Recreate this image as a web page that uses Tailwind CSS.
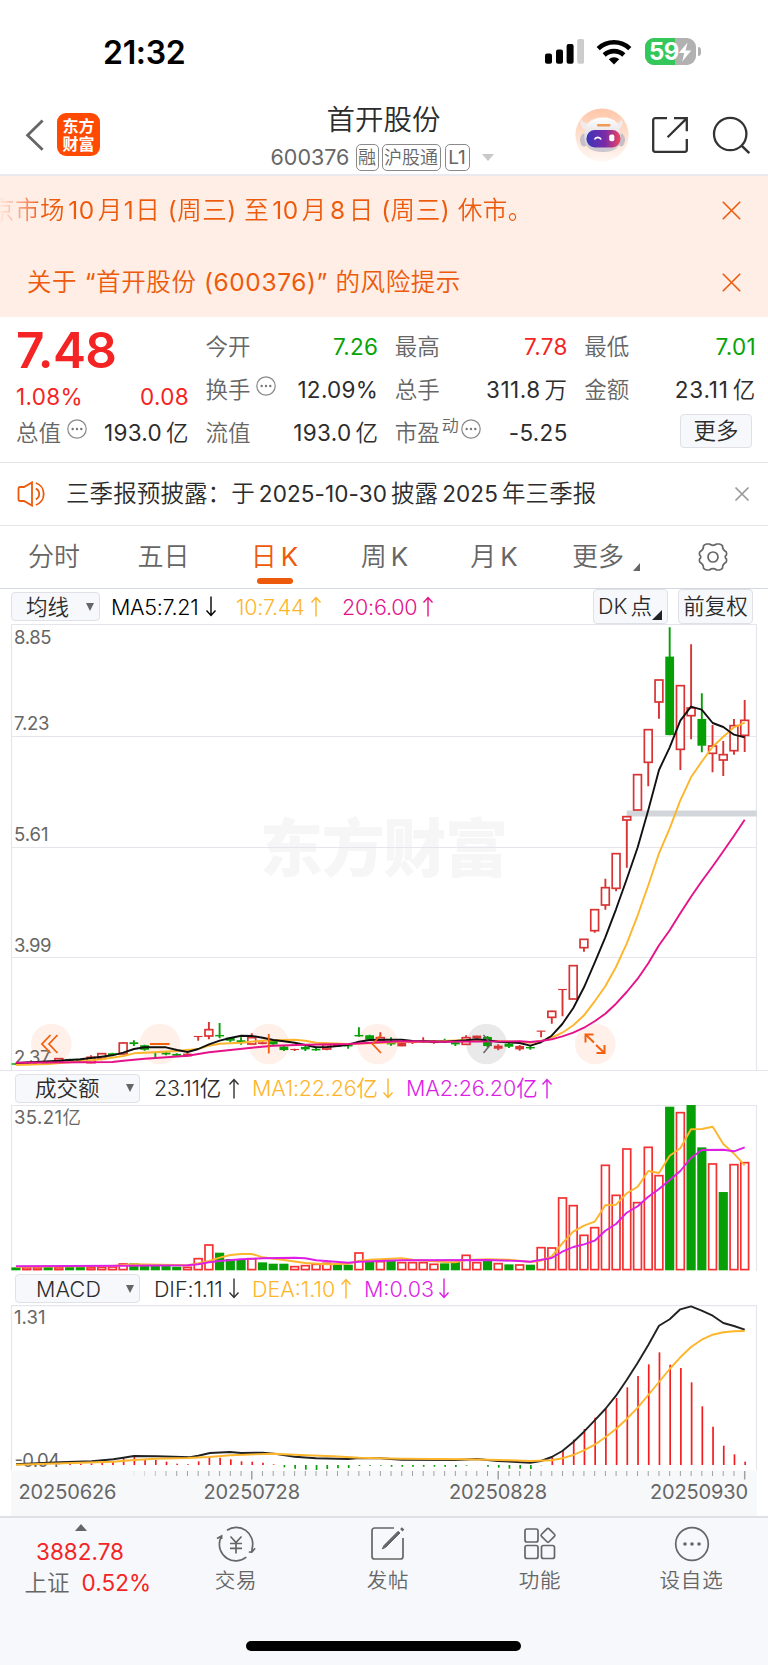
<!DOCTYPE html>
<html lang="zh-CN">
<head>
<meta charset="utf-8">
<title>首开股份 600376</title>
<script src="https://cdn.jsdelivr.net/npm/@tailwindcss/browser@4"></script>
</head>
<body class="w-[768px] h-[1665px] overflow-hidden bg-white text-[#2c2c2c] font-normal font-['Inter','Noto_Sans_CJK_SC_DemiLight','Noto_Sans_CJK_SC',sans-serif]">
<div class="flex flex-col w-[768px] h-[1665px]">

  <!-- status bar -->
  <div class="h-[90px] shrink-0 flex items-start pt-[34px] pl-[103px] pr-[67px] justify-between">
    <div class="text-[32px] leading-[37px] font-semibold text-black tracking-[-0.3px]">21:32</div>
    <div class="flex items-center mt-[4px] h-[27px]">
      <svg class="w-[39px] h-[25px]" viewBox="545 39.5 39 25"><g fill="#000"><rect x="545" y="54" width="7" height="10.2" rx="2"/><rect x="556" y="50" width="7" height="14.2" rx="2"/><rect x="566.6" y="44.6" width="7" height="19.6" rx="2"/></g><rect x="577.2" y="39.6" width="7" height="24.6" rx="2" fill="#ccc"/></svg>
      <svg class="w-[36px] h-[26px] ml-[12px]" viewBox="0 0 36 26"><g fill="none" stroke="#000" stroke-width="4.6"><path d="M2.2 9.6a23 23 0 0 1 31.6 0"/><path d="M8.2 16a14.3 14.3 0 0 1 19.6 0"/></g><path d="M18 25.5l-5.2-5.2a7.6 7.6 0 0 1 10.4 0z"/></svg>
      <div class="relative ml-[13px] w-[51px] h-[27px] rounded-[9px] overflow-hidden bg-[#b1b1b1] flex items-center">
        <div class="absolute left-0 top-0 h-full w-[30px] bg-[#34c759]"></div>
        <span class="relative ml-[4px] text-[24px] leading-[27px] font-bold text-white tracking-[-0.5px]">59</span>
        <svg class="relative w-[14px] h-[20px] -ml-[1px]" viewBox="0 0 14 20"><path fill="#fff" d="M9.5.5L.8 11h5.4L4.3 19.5 13.2 8.6H7.6z"/></svg>
      </div>
      <div class="ml-[2px] w-[3px] h-[9px] rounded-r-full bg-[#b1b1b1]"></div>
    </div>
  </div>

  <!-- title bar -->
  <header class="relative h-[86px] shrink-0 border-b-2 border-[#e9eaee] flex items-start justify-between pl-[25px] pr-[16px]">
    <div class="flex items-center pt-[23px]">
      <svg class="w-[20px] h-[34px]" viewBox="0 0 20 34"><path d="M17.6 2.5L2.6 17.2l15 14.6" fill="none" stroke="#666" stroke-width="2.8"/></svg>
      <div class="ml-[12px] w-[43px] h-[43px] rounded-[9px] bg-[#ff4a04] text-white font-bold font-['Noto_Sans_CJK_SC',sans-serif] text-[16px] leading-[17.5px] flex flex-col items-center justify-center"><span>东方</span><span>财富</span></div>
    </div>
    <div class="absolute inset-x-0 top-[13px] flex flex-col items-center">
      <div class="text-[28.5px] leading-[34px] -ml-[1px]">首开股份</div>
      <div class="flex items-center h-[28px] mt-[6px] -ml-[4px] text-[#666]">
        <span class="text-[21.5px] mr-[6px] w-[79px] whitespace-nowrap">600376</span>
        <span class="h-[27px] w-[23px] border border-[#8a8a8a] rounded-[5px] text-[18px] leading-[25px] text-center">融</span>
        <span class="h-[27px] w-[59px] ml-[3px] border border-[#8a8a8a] rounded-[5px] text-[18px] leading-[25px] text-center whitespace-nowrap">沪股通</span>
        <span class="h-[27px] w-[25px] ml-[4px] border border-[#8a8a8a] rounded-[5px] text-[19px] leading-[25px] text-center">L1</span>
        <svg class="w-[12px] h-[7px] ml-[12px]" viewBox="0 0 12 7"><path d="M0 0h12L6 7z" fill="#c8c8c8"/></svg>
      </div>
    </div>
    <div class="flex items-center pt-[18px]">
      <svg class="w-[54px] h-[54px]" viewBox="0 0 54 54">
        <defs>
          <linearGradient id="halo" x1="0" y1="0" x2="0" y2="1"><stop offset="0" stop-color="#fec6a8"/><stop offset="1" stop-color="#fff8f4"/></linearGradient>
          <linearGradient id="visor"><stop offset="0" stop-color="#3a35b8"/><stop offset=".55" stop-color="#7a2ba8"/><stop offset="1" stop-color="#f0475e"/></linearGradient>
          <linearGradient id="shell" x1="0" y1="0" x2="0" y2="1"><stop offset="0" stop-color="#fff"/><stop offset="1" stop-color="#c9c3cc"/></linearGradient>
        </defs>
        <circle cx="27" cy="27" r="26.6" fill="url(#halo)"/>
        <path d="M6.500 11c-3 5 0 9.500 5 10.500l6-6c-6 0-10-.5-11-4.500zM46.500 11c3 5 0 9.500-5 10.500l-6-6c6 0 10-.5 11-4.500z" fill="#f3ebea"/>
        <ellipse cx="9" cy="32" rx="4" ry="6.500" fill="#c4bfc8"/><ellipse cx="46" cy="32" rx="4" ry="6.500" fill="#c4bfc8"/>
        <path d="M9.500 31C8.500 17 15 9.500 28 9.500s18.500 7.500 17.500 21.500c0 9-7 13-17.500 13s-18.500-4-18.500-13z" fill="url(#shell)"/>
        <rect x="11.500" y="22" width="34" height="17.500" rx="8.200" fill="url(#visor)"/>
        <path d="M19.500 31.500a3.600 3.600 0 0 1 6.600 0" fill="none" stroke="#fff" stroke-width="1.700"/>
        <rect x="34.300" y="26.500" width="5" height="6.800" rx="1.800" fill="#fff"/>
        <rect x="22" y="16" width="13.500" height="2.600" rx="1" fill="#f09a55"/>
      </svg>
      <svg class="ml-[21px] w-[40px] h-[40px]" viewBox="0 0 40 40"><path d="M17 3.2H5.2a2 2 0 0 0-2 2v29.6a2 2 0 0 0 2 2h29.6a2 2 0 0 0 2-2V24M24 3.2h12.8v13M36.4 3.6L17.6 22.2" fill="none" stroke="#333" stroke-width="2.3"/></svg>
      <svg class="ml-[22px] w-[40px] h-[40px]" viewBox="0 0 40 40"><circle cx="18.2" cy="19" r="16.2" fill="none" stroke="#333" stroke-width="2.3"/><path d="M29.3 30.3l8 7.8" stroke="#333" stroke-width="2.5"/></svg>
    </div>
  </header>

  <!-- notices -->
  <section class="h-[141px] shrink-0 bg-[#feeee5] text-[#ed5a0c] text-[24.5px] flex flex-col">
    <div class="flex-1 flex items-center justify-between pr-[27px] pb-[1px]">
      <div class="-ml-[10px] whitespace-nowrap tracking-[0.55px] bg-linear-to-r from-[#feeee5] from-[8px] to-[#ed5a0c] to-[50px] bg-clip-text text-transparent">京市场<span class="mx-[3px]">10</span>月<span class="mx-[1px]">1</span>日 (周三) 至<span class="mx-[3px]">10</span>月<span class="mx-[3px]">8</span>日 (周三) 休市。</div>
      <svg class="w-[19px] h-[19px]" viewBox="0 0 19 19"><path d="M.8.8l17.4 17.4M18.2.8L.8 18.2" stroke="#ed5a0c" stroke-width="1.6"/></svg>
    </div>
    <div class="flex-1 flex items-center justify-between pl-[27px] pr-[27px] pt-[1px]">
      <div class="whitespace-nowrap tracking-[0.6px]">关于 “首开股份 (600376)” 的风险提示</div>
      <svg class="w-[19px] h-[19px]" viewBox="0 0 19 19"><path d="M.8.8l17.4 17.4M18.2.8L.8 18.2" stroke="#ed5a0c" stroke-width="1.6"/></svg>
    </div>
  </section>

  <!-- quote summary -->
  <section class="h-[146px] shrink-0 border-b border-[#e2e3e6] grid grid-cols-4 gap-x-[17.5px] pl-[16px] pr-[12px] pt-[8px] text-[22.5px] leading-[43px]">
    <div class="flex flex-col">
      <div class="h-[55px] text-[49.5px] leading-[51px] font-semibold text-[#f42424] tracking-[-0.6px]">7.48</div>
      <div class="h-[31px] -mr-[1px] flex justify-between text-[#f42424] leading-[33px] tracking-[0.3px]"><span>1.08%</span><span>0.08</span></div>
      <div class="-mr-[1px] flex justify-between items-center whitespace-nowrap"><span class="flex items-center text-[#666]">总值<svg class="ml-[6px] -mt-[8px] w-[20px] h-[20px]" viewBox="0 0 20 20"><circle cx="10" cy="10" r="9.2" fill="none" stroke="#888" stroke-width="1.2"/><g fill="#777"><circle cx="5.7" cy="10" r="1.2"/><circle cx="10" cy="10" r="1.2"/><circle cx="14.3" cy="10" r="1.2"/></g></svg></span><span class="tracking-[0.3px]">193.0<span class="ml-[4px]">亿</span></span></div>
    </div>
    <div class="flex flex-col">
      <div class="-mr-[1px] flex justify-between"><span class="text-[#666]">今开</span><span class="text-[#09a309] tracking-[0.3px]">7.26</span></div>
      <div class="-mr-[1px] flex justify-between"><span class="flex items-center text-[#666]">换手<svg class="ml-[6px] -mt-[8px] w-[20px] h-[20px]" viewBox="0 0 20 20"><circle cx="10" cy="10" r="9.2" fill="none" stroke="#888" stroke-width="1.2"/><g fill="#777"><circle cx="5.7" cy="10" r="1.2"/><circle cx="10" cy="10" r="1.2"/><circle cx="14.3" cy="10" r="1.2"/></g></svg></span><span class="tracking-[0.3px]">12.09%</span></div>
      <div class="-mr-[1px] flex justify-between"><span class="text-[#666]">流值</span><span class="tracking-[0.3px]">193.0<span class="ml-[4px]">亿</span></span></div>
    </div>
    <div class="flex flex-col">
      <div class="-mr-[1px] flex justify-between"><span class="text-[#666]">最高</span><span class="text-[#f42424] tracking-[0.3px]">7.78</span></div>
      <div class="-mr-[1px] flex justify-between"><span class="text-[#666]">总手</span><span class="tracking-[0.5px]">311.8<span class="ml-[4px]">万</span></span></div>
      <div class="-mr-[1px] flex justify-between"><span class="flex items-center text-[#666]">市盈<span class="text-[17px] leading-[20px] -mt-[14px] ml-[2px]">动</span><svg class="ml-[2px] -mt-[8px] w-[20px] h-[20px]" viewBox="0 0 20 20"><circle cx="10" cy="10" r="9.2" fill="none" stroke="#888" stroke-width="1.2"/><g fill="#777"><circle cx="5.7" cy="10" r="1.2"/><circle cx="10" cy="10" r="1.2"/><circle cx="14.3" cy="10" r="1.2"/></g></svg></span><span class="tracking-[0.3px]">-5.25</span></div>
    </div>
    <div class="flex flex-col">
      <div class="flex justify-between"><span class="text-[#666]">最低</span><span class="text-[#09a309] tracking-[0.3px]">7.01</span></div>
      <div class="flex justify-between"><span class="text-[#666]">金额</span><span class="tracking-[0.8px]">23.11<span class="ml-[4px]">亿</span></span></div>
      <div class="flex justify-end pt-[3px] pr-[4px]"><span class="w-[72px] h-[34px] border border-[#dfe1e6] rounded-[4px] bg-[#f7f8fb] text-center leading-[32px]">更多</span></div>
    </div>
  </section>

  <!-- report reminder -->
  <section class="h-[63px] shrink-0 border-b border-[#e6e7ea] flex items-center pl-[17px] pr-[18px]">
    <svg class="w-[32px] h-[26px]" viewBox="0 0 32 26" fill="none" stroke="#ed5a0c" stroke-width="1.8"><path d="M1.500 7.500q0-1.500 1.500-1.500h4l8-4.600v23.200L7 20H3q-1.500 0-1.500-1.500z"/><path d="M18.800 7.600a6 6 0 0 1 0 10.800M18.800 2a11.600 11.600 0 0 1 0 22"/></svg>
    <div class="ml-[17px] text-[23.5px] tracking-[0.1px] whitespace-nowrap">三季报预披露：于<span class="mx-[4px] text-[22.5px] tracking-[0.1px]">2025-10-30</span>披露<span class="mx-[4px] text-[22.5px] tracking-[0.1px]">2025</span>年三季报</div>
    <svg class="ml-auto w-[16px] h-[16px]" viewBox="0 0 16 16"><path d="M1.500 1.500l13 13M14.500 1.500l-13 13" stroke="#999" stroke-width="1.700"/></svg>
  </section>

  <!-- period tabs -->
  <nav class="h-[63px] shrink-0 border-b border-[#d3d7df] flex items-center text-[26px] leading-[62px] text-[#666] whitespace-nowrap">
    <span class="w-[108px] text-center">分时</span>
    <span class="w-[111px] text-center">五日</span>
    <span class="relative w-[111px] h-[62px] text-center text-[#ed5a0c]">日<span class="ml-[4px]">K</span><i class="absolute left-[38px] bottom-[4px] w-[36px] h-[6px] rounded-full bg-[#ed5a0c]"></i></span>
    <span class="w-[109px] text-center">周<span class="ml-[4px]">K</span></span>
    <span class="w-[110px] text-center">月<span class="ml-[4px]">K</span></span>
    <span class="w-[97px] pl-[23px]">更多</span>
    <svg class="w-[7px] h-[8px] -ml-[13px] mt-[19px]" viewBox="0 0 7 8"><path d="M7 0v8H0z" fill="#666"/></svg>
    <svg class="ml-[58px] w-[30px] h-[28px]" viewBox="-15 -14 30 28" fill="none" stroke="#666" stroke-width="1.700"><circle r="5"/><path d="M-6.500-13h2.800q3.700 2.600 7.400 0h2.800q2.500.8 3 1.800q-.2 4 3.600 6q.8 1.200.4 3.100q-2.600 2.100 0 4.200q.4 1.900-.4 3.100q-3.800 2-3.600 6q-.5 1-3 1.800h-2.800q-3.700-2.600-7.400 0h-2.800q-2.500-.8-3-1.800q.2-4-3.600-6q-.8-1.200-.4-3.100q2.600-2.100 0-4.200q-.4-1.900.4-3.100q3.800-2 3.600-6q.5-1 3-1.800z"/></svg>
  </nav>

  <!-- moving averages legend -->
  <div class="h-[35px] shrink-0 flex items-center pl-[11px] pr-[15px] text-[21.5px] leading-[28px] font-[350] whitespace-nowrap">
    <span class="w-[89px] h-[29px] border border-[#dfe1e6] rounded-[4px] bg-[#f7f8fb] flex items-center pl-[14px]"><span class="w-[50px]">均线</span><svg class="ml-[10px] w-[8px] h-[8px]" viewBox="0 0 8 8"><path d="M0 0h8L4 8z" fill="#666"/></svg></span>
    <span class="w-[94px] ml-[11px] text-black tracking-[-0.3px]">MA5:7.21</span>
    <svg class="w-[12px] h-[21px]" viewBox="0 0 12 21"><path d="M6 .5v19M1.500 14.500L6 19.500l4.500-5" fill="none" stroke="#000" stroke-width="1.400"/></svg>
    <span class="w-[74px] ml-[19px] text-[#fdb62c] tracking-[-0.3px]">10:7.44</span>
    <svg class="w-[12px] h-[21px]" viewBox="0 0 12 21"><path d="M6 20.500V1.500M1.500 6.500L6 1.500l4.500 5" fill="none" stroke="#fdb62c" stroke-width="1.400"/></svg>
    <span class="w-[80px] ml-[20px] text-[#e5128a] tracking-[-0.2px]">20:6.00</span>
    <svg class="w-[12px] h-[21px]" viewBox="0 0 12 21"><path d="M6 20.500V1.500M1.500 6.500L6 1.500l4.500 5" fill="none" stroke="#e5128a" stroke-width="1.400"/></svg>
    <span class="relative ml-auto w-[75px] h-[35px] border border-[#dfe1e6] rounded-[4px] bg-[#f7f8fb] pl-[4px] leading-[33px]">DK<span class="ml-[3px]">点</span><svg class="absolute right-[5px] bottom-[3px] w-[10px] h-[10px]" viewBox="0 0 10 10"><path d="M10 0v10H0z" fill="#222"/></svg></span>
    <span class="ml-[10px] w-[75px] h-[35px] border border-[#dfe1e6] rounded-[4px] bg-[#f7f8fb] text-center leading-[33px]">前复权</span>
  </div>

  <!-- candlestick chart -->
  <svg id="price" class="w-[768px] h-[446px] shrink-0" viewBox="0 624 768 446">
    <text class="font-['Noto_Sans_CJK_SC',sans-serif]" x="260" y="871" font-size="63" font-weight="900" fill="#f6f6f7" textLength="248">东方财富</text>
    <g stroke="#e4e6ec" fill="none"><path d="M11.500 624.500H756.500V1070M11.500 624.500V1070M11 736.500H756M11 847.500H756M11 957.500H756" stroke-width="1.200"/></g>
    <rect x="626.700" y="810.500" width="130" height="6" fill="#d2d5da"/>
    <g fill="#fff0e9"><circle cx="51.300" cy="1044" r="20.300"/><circle cx="160" cy="1044" r="20.300"/><circle cx="268.800" cy="1044" r="20.300"/><circle cx="377.600" cy="1044" r="20.300"/><circle cx="595.300" cy="1044" r="20.300"/></g>
    <circle cx="486.500" cy="1044" r="20.300" fill="#e9e9ea"/>
    <g font-size="18.500" fill="#666"><text x="14" y="644" textLength="37.500">8.85</text><text x="14" y="730" textLength="35.500">7.23</text><text x="14" y="841" textLength="34.500">5.61</text><text x="14" y="952" textLength="37.500">3.99</text><text x="14" y="1063.500" textLength="36.500">2.37</text></g>
    <g id="candles"></g>
    <g id="priceLines" fill="none" stroke-width="1.900" stroke-linejoin="round"></g>
    <g fill="none" stroke="#f5600f" stroke-width="1.800"><path d="M50.500 1035L42 1044l8.500 9M57.500 1035L49 1044l8.500 9M150 1044h19.500M268.800 1034v19.500M381 1035l-8.500 9 8.500 9"/><path d="M585.500 1042.500v-8h8M586 1035l8 7.500M604.500 1045v8h-8M604 1052.500l-8-7.500" stroke-width="2"/></g>
    <path d="M483.500 1035l7.500 9-7.500 9" fill="none" stroke="#666" stroke-width="1.500"/>
  </svg>

  <!-- turnover legend -->
  <div class="h-[35px] shrink-0 border-t border-[#e4e6ec] flex items-center pl-[15px] text-[21.5px] leading-[28px] font-[350] whitespace-nowrap">
    <span class="w-[125px] h-[29px] border border-[#dfe1e6] rounded-[4px] bg-[#f7f8fb] flex items-center pl-[19px]"><span class="w-[80px]">成交额</span><svg class="ml-[11px] w-[8px] h-[8px]" viewBox="0 0 8 8"><path d="M0 0h8L4 8z" fill="#666"/></svg></span>
    <span class="w-[74px] ml-[14px] tracking-[-0.2px]">23.11亿</span>
    <svg class="w-[12px] h-[21px]" viewBox="0 0 12 21"><path d="M6 20.500V1.500M1.500 6.500L6 1.500l4.500 5" fill="none" stroke="#333" stroke-width="1.400"/></svg>
    <span class="w-[130px] ml-[12px] text-[#fdb62c] tracking-[-0.2px]">MA1:22.26亿</span>
    <svg class="w-[12px] h-[21px]" viewBox="0 0 12 21"><path d="M6 .5v19M1.500 14.500L6 19.500l4.500-5" fill="none" stroke="#fdb62c" stroke-width="1.400"/></svg>
    <span class="w-[135px] ml-[12px] text-[#dd1fe6] tracking-[-0.1px]">MA2:26.20亿</span>
    <svg class="w-[12px] h-[21px]" viewBox="0 0 12 21"><path d="M6 20.500V1.500M1.500 6.500L6 1.500l4.500 5" fill="none" stroke="#dd1fe6" stroke-width="1.400"/></svg>
  </div>

  <!-- turnover chart -->
  <svg class="w-[768px] h-[166px] shrink-0" viewBox="0 1105 768 166">
    <path d="M11.500 1271V1105.500H756.500V1271" fill="none" stroke="#e4e6ec" stroke-width="1.200"/>
    <text x="14" y="1124" font-size="18.500" fill="#666" textLength="67">35.21亿</text>
    <g id="volBars"></g>
    <g id="volLines" fill="none" stroke-width="1.900" stroke-linejoin="round"></g>
  </svg>

  <!-- MACD legend -->
  <div class="h-[34px] shrink-0 flex items-center pt-[1px] pl-[15px] text-[21.500px] leading-[28px] font-[350] whitespace-nowrap">
    <span class="w-[125px] h-[29px] border border-[#dfe1e6] rounded-[4px] bg-[#f7f8fb] flex items-center pl-[20px]"><span class="w-[79px] tracking-[0.2px]">MACD</span><svg class="ml-[11px] w-[8px] h-[8px]" viewBox="0 0 8 8"><path d="M0 0h8L4 8z" fill="#666"/></svg></span>
    <span class="w-[74px] ml-[14px] tracking-[-0.1px]">DIF:1.11</span>
    <svg class="w-[12px] h-[21px]" viewBox="0 0 12 21"><path d="M6 .5v19M1.500 14.500L6 19.500l4.500-5" fill="none" stroke="#333" stroke-width="1.400"/></svg>
    <span class="w-[88px] ml-[12px] text-[#fdb62c]">DEA:1.10</span>
    <svg class="w-[12px] h-[21px]" viewBox="0 0 12 21"><path d="M6 20.500V1.500M1.500 6.500L6 1.500l4.500 5" fill="none" stroke="#fdb62c" stroke-width="1.400"/></svg>
    <span class="w-[74px] ml-[12px] text-[#dd1fe6]">M:0.03</span>
    <svg class="w-[12px] h-[21px]" viewBox="0 0 12 21"><path d="M6 .5v19M1.500 14.500L6 19.500l4.500-5" fill="none" stroke="#dd1fe6" stroke-width="1.400"/></svg>
  </div>

  <!-- MACD chart and date axis -->
  <svg class="w-[768px] h-[211px] shrink-0" viewBox="0 1305 768 211">
    <rect x="11" y="1470.500" width="746" height="47" fill="#f7f8fa"/>
    <path d="M11.500 1470V1305.700H756.500V1470" fill="none" stroke="#e4e6ec" stroke-width="1.200"/>
    <g font-size="18.500" fill="#666"><text x="14" y="1324" textLength="31.500">1.31</text><text x="14.500" y="1467" textLength="45.500">-0.04</text></g>
    <g id="macdBars" stroke-width="1.700"></g>
    <g id="macdLines" fill="none" stroke-width="1.900" stroke-linejoin="round"></g>
    <g id="ticks" stroke="#a0a0a0"></g>
    <g font-size="20" fill="#666"><text x="18.500" y="1499.300" textLength="98">20250626</text><text x="203.500" y="1499.300" textLength="96.500">20250728</text><text x="449" y="1499.300" textLength="98">20250828</text><text x="650" y="1499.300" textLength="98">20250930</text></g>
  </svg>

  <!-- bottom navigation -->
  <footer class="relative flex-1 border-t-2 border-[#dfe1e6] bg-[#f7f8fb] text-[#666] text-[20.500px]">
    <div class="flex whitespace-nowrap">
      <div class="w-[161px] flex flex-col items-center pt-[6px]">
        <svg class="w-[12px] h-[7px]" viewBox="0 0 12 7"><path d="M6 0l6 7H0z" fill="#666"/></svg>
        <span class="text-[22.500px] leading-[30px] mt-[6px] -ml-[1px] text-[#f42424]">3882.78</span>
        <span class="text-[22.500px] leading-[32px] flex gap-[12px] ml-[24px] w-[136px]"><span>上证</span><span class="text-[#f42424] tracking-[0.1px]">0.52%</span></span>
      </div>
      <div class="w-[150px] flex flex-col items-center pt-[8px]">
        <svg class="w-[40px] h-[36px]" viewBox="0 0 40 36" fill="none" stroke="#666" stroke-width="1.700"><path d="M11 4.200A16.500 16.500 0 0 1 36.200 22L35.800 26M32.800 26l3 .2 3.300-4M30.300 31.200A16.500 16.500 0 0 1 4 14L5.600 9.800M1 12.500L5.600 10v3M14.500 10.500l5.500 6 5.500-6M20 16v11.500M14 17.500h12M14 22.300h12"/></svg>
        <span class="leading-[30px] mt-[4px] tracking-[0.8px]">交易</span>
      </div>
      <div class="w-[154px] flex flex-col items-center pt-[8px]">
        <svg class="w-[36px] h-[36px]" viewBox="0 0 36 36" fill="none" stroke="#666" stroke-width="1.700"><path d="M24 2H4.500A2.500 2.500 0 0 0 2 4.500v26A2.500 2.500 0 0 0 4.500 33h26a2.500 2.500 0 0 0 2.500-2.500V12"/><path d="M12.200 22.900l2-3.600L28.200 5.200l1.800 1.800L15.800 21.200z" fill="#666" stroke-width="1"/><path d="M31.300 4.200l1.800-1.800" stroke-width="3.400"/></svg>
        <span class="leading-[30px] mt-[4px] tracking-[0.8px]">发帖</span>
      </div>
      <div class="w-[150px] flex flex-col items-center pt-[8px]">
        <svg class="w-[34px] h-[36px]" viewBox="0 0 34 36" fill="none" stroke="#666" stroke-width="1.700"><rect x="2" y="3" width="13" height="13" rx="2"/><rect x="2" y="19.500" width="13" height="13" rx="2"/><rect x="18.500" y="19.500" width="13" height="13" rx="2"/><rect x="19.700" y="4" width="10.600" height="10.600" rx="1.500" transform="rotate(45 25 9.300)"/></svg>
        <span class="leading-[30px] mt-[4px] tracking-[0.8px]">功能</span>
      </div>
      <div class="w-[153px] flex flex-col items-center pt-[8px]">
        <svg class="w-[36px] h-[36px]" viewBox="0 0 36 36"><circle cx="18" cy="18" r="16.300" fill="none" stroke="#666" stroke-width="1.700"/><g fill="#666"><circle cx="11" cy="18" r="1.800"/><circle cx="18" cy="18" r="1.800"/><circle cx="25" cy="18" r="1.800"/></g></svg>
        <span class="leading-[30px] mt-[4px] tracking-[0.8px]">设自选</span>
      </div>
    </div>
    <div class="absolute left-[246px] bottom-[14px] w-[275px] h-[10px] rounded-full bg-black"></div>
  </footer>
</div>

<script>
const NS = 'http://www.w3.org/2000/svg';
const $ = id => document.getElementById(id);
const add = (g, tag, a) => { const e = document.createElementNS(NS, tag); for (const k in a) e.setAttribute(k, a[k]); g.appendChild(e); };
const X = i => 16 + 10.716 * i;
const RED = '#d93434', GREEN = '#06a006';

// series points, in thirds of a pixel from each segment's origin
const seg = (ox, oy, s) => s.trim().split(' ').map(p => { const [x, y] = p.split(',').map(Number); return (ox + x / 3).toFixed(1) + ',' + (oy + y / 3).toFixed(1); });
const line = (g, stroke, ...segs) => add($(g), 'polyline', { points: segs.flat().join(' '), stroke });

// candles: colour, high, body top, body bottom, low
const low = `g190,191,193,194 r187,187,189,189 r186,186,188,188 g186,187,190,195 r174,176,185,186 g176,178,181,183 g178,179,182,184 r166,172,188,190 r160,161,175,181 g158,161,164,168 r126,129,162,163 g121,128,131,138 g134,137,148,152 g156,157,158,172 g155,159,162,166 g160,163,166,169 r160,162,168,169 r108,109,110,122 r66,89,108,118 g69,106,108,115 g112,114,121,127 g112,122,128,134 r100,113,132,133 r124,128,131,133 g118,120,132,134 g138,141,149,153 r146,148,149,153 g138,142,147,153 g144,148,150,152 r132,134,147,151 r132,136,138,141 g134,136,138,146 g82,106,108,110 g104,107,118,119 r97,113,122,124 g112,128,132,137 r125,130,138,139 r124,126,128,132 r112,123,126,129 r120,125,128,131 g116,122,124,128 g122,128,132,138 r106,113,133,134 r107,108,114,115 g108,112,137,142 r133,138,145,151 g128,132,139,144 r135,139,147,152 g137,142,144,149`;
const high = `r1262,1263,1264,1282 r1202,1204,1222,1241 r1137,1138,1139,1219 r1066,1067,1167,1168 r987,988,1013,1025 r898,899,962,968 r806,833,885,899 r730,731,835,844 r619,620,630,773 r493,494,600,601 r358,359,457,529 r209,210,276,326 g52,141,374,376 r226,227,418,480 r103,294,317,388 g250,328,406,427 r345,408,430,487 r393,434,450,498 r327,347,422,434 r270,331,376,426`;
const draw = (s, start, oy) => s.split(' ').forEach((c, k) => {
  const col = c[0] === 'r' ? RED : GREEN, x = X(start + k);
  const [h, t, b, l] = c.slice(1).split(',').map(v => oy + v / 3);
  const g = $('candles');
  add(g, 'path', { d: `M${x} ${h}V${t}M${x} ${b}V${l}`, stroke: col, 'stroke-width': 1.9 });
  if (c[0] === 'g' || b - t < 3) add(g, 'rect', { x: x - 4.4, y: t - .4, width: 8.8, height: b - t + .8, fill: col });
  else add(g, 'rect', { x: x - 3.9, y: t, width: 7.8, height: b - t, fill: '#fff', stroke: col, 'stroke-width': 1.7 });
});
draw(low, 0, 1000);
draw(high, 49, 610);

line('priceLines', '#fdb62c',
  seg(0, 1000, '48,195 145,192 209,187 305,178 370,168 402,160 434,158 531,153 595,147 627,137 659,131 724,128 788,122 852,120 884,119 916,122 948,128 1045,132 1109,130'),
  seg(380, 1000, '65,126 194,123 258,120 322,122 419,125 451,128'),
  seg(510, 610, '93,1293 125,1283 157,1268 190,1246 222,1216 254,1174 286,1129 318,1071 350,1001 383,916 415,826 447,730 479,655 511,571 543,502 575,455 608,410 640,380 672,352 704,338'));
line('priceLines', '#111',
  seg(0, 1000, '48,189 112,186 177,182 241,178 305,170 337,166 370,158 402,147 434,142 498,142 531,150 563,156 595,147 627,133 659,122 691,114 724,107 756,108 788,113 820,120 852,124 884,128 916,135 948,142 981,141 1013,138 1045,134 1077,125 1109,120 1141,119'),
  seg(380, 1000, '65,119 98,123 194,125 258,121 290,118 322,121 354,125 419,129'),
  seg(510, 610, '61,1307 93,1297 125,1277 157,1242 190,1194 222,1132 254,1058 286,982 318,898 350,808 383,712 415,600 447,480 479,412 511,332 543,290 575,299 608,339 640,351 672,374 704,382'));
line('priceLines', '#e5128a',
  seg(0, 1000, '48,188 337,186 370,182 434,176 500,172 563,167 627,157 691,150 756,143 820,137 916,134 1045,132 1141,127'),
  seg(380, 1000, '65,124 194,125 419,124'),
  seg(510, 610, '61,1296 93,1293 125,1288 157,1279 190,1268 222,1253 254,1234 286,1211 318,1181 350,1146 383,1106 415,1060 447,1006 479,961 511,910 543,860 575,814 608,769 640,724 672,677 704,629'));

// turnover bars: colour and top
`g803 r803 r803 g802 r803 g802 g802 r803 r802 r801 r792 g791 g796 g797 g799 g801 r802 r776 r735 g759 g778 g780 r776 g788 g792 g792 r800 r797 r793 r790 g794 g795 r759 g784 r785 g784 r788 r788 r788 r793 g791 g787 r766 r788 g784 r791 g794 r795 g795 r743 r744 r594 r617 r706 r683 r496 r586 r447 r608 r442 r527 g321 r338 g316 g443 r492 g577 r494 r488`.split(' ').forEach((v, i) => {
  const y = 1000 + v.slice(1) / 3, x = X(i);
  if (v[0] === 'g') add($('volBars'), 'rect', { x: x - 4.6, y: y - .3, width: 9.2, height: 1270.6 - y, fill: '#06a006' });
  else add($('volBars'), 'rect', { x: x - 3.9, y, width: 7.8, height: 1269.6 - y, fill: '#fff', stroke: '#f53030', 'stroke-width': 1.7 });
});
line('volLines', '#fdb62c',
  seg(0, 1000, '48,800 337,798 402,793 563,796 595,790 627,783 659,773 691,765 724,762 756,762 788,772 852,780 916,789 981,793 1045,791 1077,783 1109,779'),
  seg(380, 1000, '65,775 98,779 194,786 226,787 258,780 322,778 387,779 451,786 483,782 515,769 547,730 580,695 612,677 644,665 676,616 708,614 740,580 773,560 805,513 837,519 869,467 901,445 933,388 965,387 998,380 1030,432 1062,461 1094,496'));
line('volLines', '#dd1fe6',
  seg(0, 1000, '48,799 370,797 563,796 595,793 627,787 659,783 724,778 788,775 884,773 916,775 948,781 1045,788 1077,785'),
  seg(380, 1000, '65,781 322,780 419,783 451,785 515,774 547,755 580,741 612,733 644,722 676,692 708,672 740,638 773,619 805,590 837,567 869,540 901,513 933,474 965,450 1030,449 1062,454 1094,442'));

// MACD histogram: end of each bar, measured against the zero line
const macd = [585,585,585,585,584,582,581,580,576,573,564,560,568,570,575,581,583,574,564,563,568,574,575,578,583,592,596,599,600,597,595,594,588,587,587,590,590,590,590,590,590,591,587,585,590,593,596,596,597,586,562,541,509,477,443,414,384,352,318,283,247,284,294,337,409,470,527,553,575];
macd.forEach((v, i) => { if (v !== 585) add($('macdBars'), 'path', { d: `M${X(i) + .5} 1465V${1270 + v / 3}`, stroke: v < 585 ? '#f51d1d' : '#06a006' }); });
line('macdLines', '#222',
  seg(0, 1270, '48,583 180,577 275,574 340,568 370,563 402,558 470,559 570,562 595,557 630,549 690,546 724,549 788,548 830,552 884,560 948,565 1045,567 1077,564'),
  seg(380, 1270, '1,565 65,569 226,570 290,567 354,573 451,578 483,573 515,561 547,543 580,516 612,485 644,451 676,417 708,377 740,330 773,278 805,225 837,167 869,148 901,118 933,109 965,122 998,137 1030,159 1062,168 1094,179'));
line('macdLines', '#fdb62c',
  seg(0, 1270, '48,584 340,575 402,570 466,566 563,564 627,561 691,556 820,551 900,555 1000,559 1077,563'),
  seg(380, 1270, '65,566 258,568 387,571 451,573 515,571 547,565 580,555 612,541 644,524 676,502 708,477 740,447 773,413 805,375 837,336 869,297 901,262 933,231 965,209 998,194 1030,187 1062,184 1094,183'));
for (let i = 11; i <= 68; i++) {
  const major = i === 22 || i === 45 || i === 68;
  add($('ticks'), 'path', { d: `M${X(i)} 1471V${major ? 1479.5 : 1476}`, 'stroke-width': major ? 1.5 : 1, opacity: Math.min(1, (i - 10) / 5) });
}
</script>
</body>
</html>
